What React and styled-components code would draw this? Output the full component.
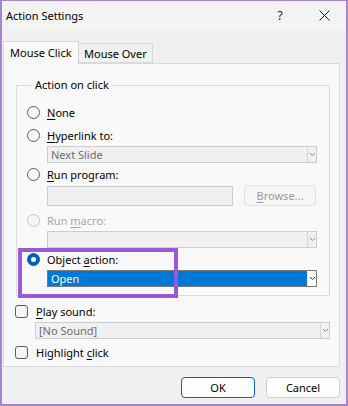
import React from 'react';
import styled, { createGlobalStyle } from 'styled-components';

const GlobalStyle = createGlobalStyle`
  html, body {
    margin: 0;
    padding: 0;
    background: #ffffff;
  }
  * {
    box-sizing: border-box;
  }
`;

const FONT = `"Segoe UI", "Noto Sans", "Open Sans", sans-serif`;

const Window = styled.div`
  position: relative;
  width: 348px;
  height: 406px;
  display: flex;
  flex-direction: column;
  background: #f0f0f0;
  border: 2px solid #a386cf;
  border-top-width: 1px;
  font-family: ${FONT};
  font-size: 11px;
  color: #000;
  white-space: nowrap;
`;

const TitleBar = styled.div`
  height: 29px;
  display: flex;
  align-items: center;
  padding-left: 4px;
  background: #f3f3f3;
`;

const Title = styled.div`
  flex: 1;
  font-size: 11px;
`;

const TitleButton = styled.div`
  width: 44px;
  height: 29px;
  display: flex;
  align-items: center;
  justify-content: center;
  font-size: 12px;
  color: #1a1a1a;
`;

const Body = styled.div`
  flex: 1;
  display: flex;
  flex-direction: column;
  padding: 11px 6px 0 1px;
`;

const TabStrip = styled.div`
  display: flex;
  align-items: flex-end;
  height: 22px;
  position: relative;
  z-index: 1;
`;

const Tab = styled.div`
  width: ${p => (p.$active ? 76 : 74)}px;
  height: ${p => (p.$active ? 23 : 20)}px;
  margin-bottom: ${p => (p.$active ? -1 : 0)}px;
  padding-left: ${p => (p.$active ? 6 : 5)}px;
  padding-bottom: ${p => (p.$active ? 2 : 0)}px;
  display: flex;
  align-items: center;
  background: ${p => (p.$active ? '#f9f9f9' : '#f0f0f0')};
  border: 1px solid #d9d9d9;
  border-bottom: ${p => (p.$active ? 'none' : '1px solid #d9d9d9')};
  border-left: ${p => (p.$active ? '1px solid #d9d9d9' : 'none')};
`;

const Panel = styled.div`
  height: 304px;
  background: #f9f9f9;
  border: 1px solid #d9d9d9;
  padding: 0 0 0 11px;
  display: flex;
  flex-direction: column;
`;

const Group = styled.fieldset`
  margin: 13px 9px 0 1px;
  padding: 11px 0 8px 10px;
  border: 1px solid #dcdcdc;
  display: flex;
  flex-direction: column;
  gap: 3px;
  min-width: 0;
`;

const Legend = styled.legend`
  margin-left: 5px;
  padding: 0 3px;
  line-height: 16px;
`;

const OptionRow = styled.label`
  display: flex;
  align-items: center;
  height: 16px;
  gap: 7px;
  margin-top: ${p => p.$extra || 0}px;
  color: ${p => (p.$disabled ? '#a6a6a6' : '#000')};
`;

const Radio = styled.span`
  position: relative;
  width: 13px;
  height: 13px;
  border-radius: 50%;
  flex: none;
  border: 1px solid ${p => (p.$checked ? '#005fb8' : p.$disabled ? '#c6c6c6' : '#5c5c5c')};
  background: ${p => (p.$checked ? '#005fb8' : p.$disabled ? '#f4f4f4' : '#f6f6f6')};

  &::after {
    content: '';
    display: ${p => (p.$checked ? 'block' : 'none')};
    position: absolute;
    left: 3px;
    top: 3px;
    width: 5px;
    height: 5px;
    border-radius: 50%;
    background: #ffffff;
  }
`;

const Check = styled.span`
  width: 13px;
  height: 13px;
  border-radius: 3px;
  flex: none;
  border: 1px solid #5c5c5c;
  background: #f6f6f6;
`;

const Key = styled.u`
  text-underline-offset: 2px;
`;

const Indent = styled.div`
  display: flex;
  align-items: center;
  gap: 11px;
  padding-left: ${p => p.$left || 20}px;
  margin-top: ${p => p.$extra || 0}px;
`;

const Select = styled.div`
  width: ${p => p.$width}px;
  height: 17px;
  display: flex;
  align-items: stretch;
  border: 1px solid ${p => (p.$active ? '#7a7a7a' : '#cccccc')};
  background: ${p => (p.$active ? '#ffffff' : '#f0f0f0')};
`;

const SelectValue = styled.div`
  flex: 1;
  display: flex;
  align-items: center;
  padding-left: 3px;
  line-height: 15px;
  color: ${p => (p.$active ? '#ffffff' : '#6d6d6d')};
  background: ${p => (p.$active ? '#0078d7' : 'transparent')};
`;

const Arrow = styled.div`
  width: 9px;
  display: flex;
  align-items: center;
  justify-content: center;
  border-left: 1px solid ${p => (p.$active ? '#ffffff' : '#d6d6d6')};
  background: ${p => (p.$active ? '#ffffff' : '#f0f0f0')};
`;

const TextBox = styled.div`
  width: 186px;
  height: 20px;
  border: 1px solid #cccccc;
  background: #f0f0f0;
`;

const Button = styled.div`
  width: ${p => p.$width || 72}px;
  height: ${p => p.$height || 21}px;
  display: flex;
  align-items: center;
  justify-content: center;
  border-radius: 4px;
  border: 1px solid ${p => (p.$primary ? '#0067c0' : p.$disabled ? '#e0e0e0' : '#d0d0d0')};
  background: ${p => (p.$disabled ? '#f6f6f6' : '#fdfdfd')};
  color: ${p => (p.$disabled ? '#9a9a9a' : '#000')};
`;

const CheckRow = styled.label`
  display: flex;
  align-items: center;
  height: 16px;
  gap: 8px;
  margin-top: ${p => p.$top || 0}px;
`;

const Footer = styled.div`
  display: flex;
  justify-content: flex-end;
  gap: 11px;
  padding: 10px 0 0 0;
`;

const Highlight = styled.div`
  position: absolute;
  left: 16px;
  top: 247px;
  width: 160px;
  height: 50px;
  border: 4px solid #9b5ad5;
  pointer-events: none;
`;

const Chevron = ({ color = '#8a8a8a' }) => (
  <svg width="7" height="5" viewBox="0 0 7 5">
    <path d="M1 1 L3.5 3.5 L6 1" fill="none" stroke={color} strokeWidth="1" />
  </svg>
);

const Dropdown = ({ width, value, active }) => (
  <Select $width={width} $active={active}>
    <SelectValue $active={active}>{value}</SelectValue>
    <Arrow $active={active}>
      <Chevron color={active ? '#333' : '#8a8a8a'} />
    </Arrow>
  </Select>
);

const CloseIcon = () => (
  <svg width="11" height="11" viewBox="0 0 11 11">
    <path d="M0.5 0.5 L10.5 10.5 M10.5 0.5 L0.5 10.5" stroke="#1a1a1a" strokeWidth="1" fill="none" />
  </svg>
);

export default function App() {
  return (
    <>
      <GlobalStyle />
      <Window>
        <TitleBar>
          <Title>Action Settings</Title>
          <TitleButton>?</TitleButton>
          <TitleButton>
            <CloseIcon />
          </TitleButton>
        </TitleBar>
        <Body>
          <TabStrip>
            <Tab $active>Mouse Click</Tab>
            <Tab>Mouse Over</Tab>
          </TabStrip>
          <Panel>
            <Group>
              <Legend>Action on click</Legend>
              <OptionRow>
                <Radio />
                <span><Key>N</Key>one</span>
              </OptionRow>
              <OptionRow $extra={4}>
                <Radio />
                <span><Key>H</Key>yperlink to:</span>
              </OptionRow>
              <Indent>
                <Dropdown width={270} value="Next Slide" />
              </Indent>
              <OptionRow>
                <Radio />
                <span><Key>R</Key>un program:</span>
              </OptionRow>
              <Indent>
                <TextBox />
                <Button $disabled $width={72}>
                  <span><Key>B</Key>rowse...</span>
                </Button>
              </Indent>
              <OptionRow $extra={3} $disabled>
                <Radio $disabled />
                <span>Run <Key>m</Key>acro:</span>
              </OptionRow>
              <Indent>
                <Dropdown width={270} value="" />
              </Indent>
              <OptionRow>
                <Radio $checked />
                <span>Object <Key>a</Key>ction:</span>
              </OptionRow>
              <Indent>
                <Dropdown width={270} value="Open" active />
              </Indent>
            </Group>
            <CheckRow $top={7}>
              <Check />
              <span><Key>P</Key>lay sound:</span>
            </CheckRow>
            <Indent $left={20} $extra={3}>
              <Dropdown width={295} value="[No Sound]" />
            </Indent>
            <CheckRow $top={5}>
              <Check />
              <span>Highlight <Key>c</Key>lick</span>
            </CheckRow>
          </Panel>
          <Footer>
            <Button $primary $width={74} $height={21}>OK</Button>
            <Button $width={74} $height={21}>Cancel</Button>
          </Footer>
        </Body>
        <Highlight />
      </Window>
    </>
  );
}
